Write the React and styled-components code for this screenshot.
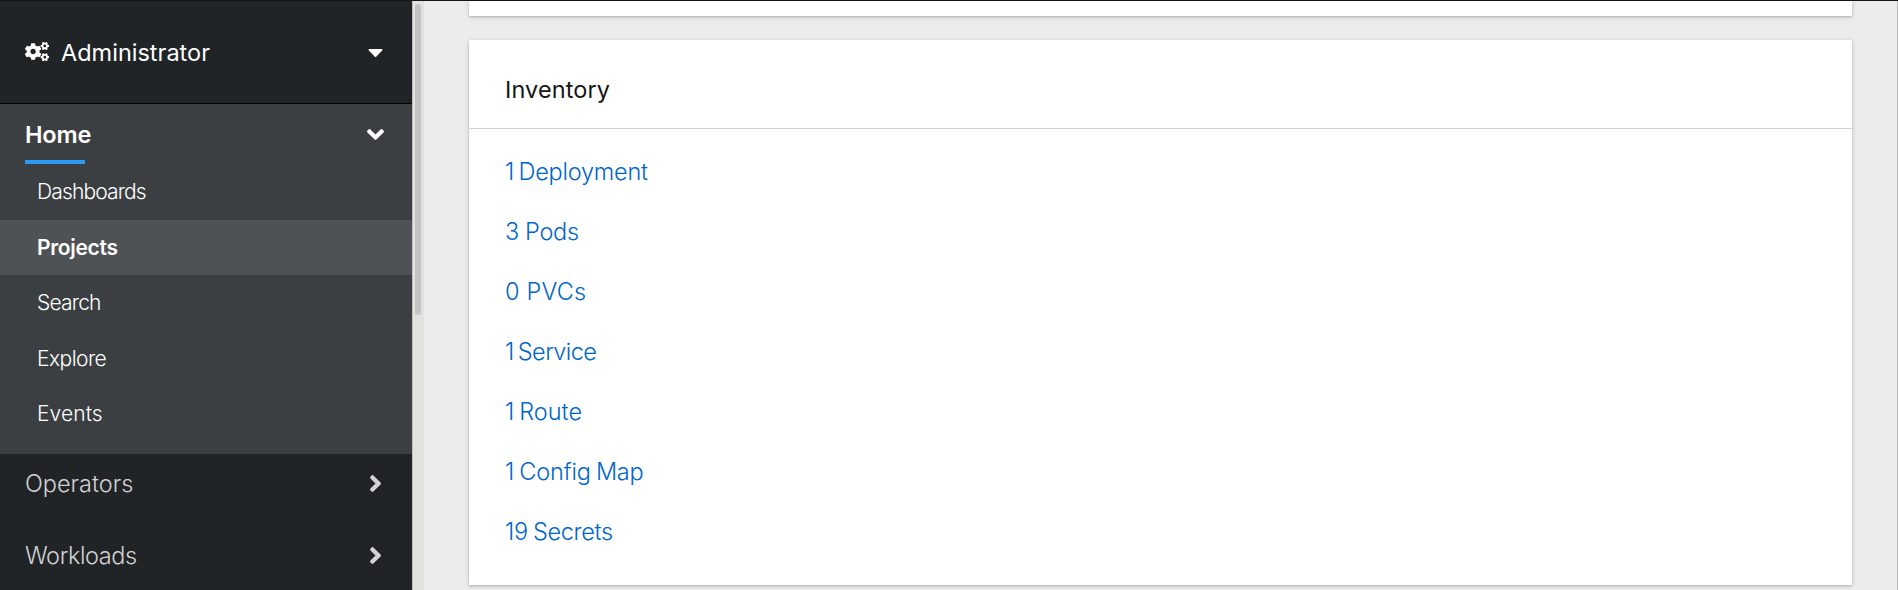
import React from "react";
import styled, { createGlobalStyle } from "styled-components";
import { FaCogs, FaCaretDown, FaAngleDown, FaAngleRight } from "react-icons/fa";

const GlobalStyle = createGlobalStyle`
  * { box-sizing: border-box; }
  body {
    margin: 0;
    overflow: hidden;
    background: #ececec;
    font-family: Inter, "Liberation Sans", sans-serif;
  }
`;

const Page = styled.div`
  display: flex;
  width: 100%;
  height: 590px;
  border-top: 1px solid #151515;
  overflow: hidden;
`;

const Sidebar = styled.nav`
  flex: none;
  width: 412px;
  background: #212427;
  color: #fff;
`;

const Label = styled.span`
  letter-spacing: ${(p) => p.$track || 0}px;
  word-spacing: ${(p) => p.$gap || 0}px;
  white-space: nowrap;
`;

const Perspective = styled.div`
  display: flex;
  align-items: center;
  height: 103px;
  padding: 0 28px 0 25px;
  border-bottom: 1px solid #030303;
  font-size: 23.5px;

  svg { flex: none; }
`;

const PerspectiveName = styled.div`
  flex: 1;
  margin-left: 12px;
  padding-top: 1px;
`;

const CogsIcon = styled(FaCogs)`
  width: 24px;
  height: 19.2px;
`;

const CaretIcon = styled(FaCaretDown)`
  width: 15px;
  height: 24px;
  margin-right: 1px;
`;

const OpenSection = styled.section`
  height: 350px;
  background: #3c3f42;
`;

const SectionHeader = styled.div`
  display: flex;
  align-items: center;
  justify-content: space-between;
  height: ${(p) => (p.$open ? 56 : 58)}px;
  margin-bottom: ${(p) => (p.$open ? 0 : 14)}px;
  padding: ${(p) => (p.$open ? "5px 28px 0 25px" : "0 28px 0 25px")};
  color: ${(p) => (p.$open ? "#fff" : "#d2d2d2")};
  font-size: 23.5px;
  font-weight: ${(p) => (p.$open ? 600 : 300)};

  svg {
    width: 17px;
    height: 27px;
  }
`;

const ActiveBar = styled.div`
  width: 60px;
  height: 4px;
  margin-left: 25px;
  background: #2b9af3;
`;

const SubList = styled.ul`
  margin: 0;
  padding: 0;
  list-style: none;
`;

const SubItem = styled.li`
  display: flex;
  align-items: center;
  height: 55.25px;
  padding-left: 37px;
  background: ${(p) => (p.$active ? "#4f5255" : "transparent")};
  font-size: 21px;
  font-weight: ${(p) => (p.$active ? 600 : 300)};

  &:first-child { padding-bottom: 1px; height: 56px; }
`;

const ScrollTrack = styled.div`
  flex: none;
  width: 12px;
  padding: 3px 3px 0 2px;
  border-left: 1px solid #c4c1bb;
  background: #e1e1df;
`;

const ScrollThumb = styled.div`
  width: 6px;
  height: 311px;
  border-radius: 3px;
  background: #c3c5c4;
`;

const Content = styled.main`
  flex: 1;
  padding: 0 45px;
  border-right: 1px solid #bababa;
`;

const Card = styled.section`
  background: #fff;
  box-shadow: 0 1px 2px rgba(3, 3, 3, 0.16), 0 1px 5px rgba(3, 3, 3, 0.14);
`;

const PreviousCard = styled(Card)`
  height: 15px;
  margin-bottom: 24px;
`;

const CardHeader = styled.header`
  display: flex;
  align-items: center;
  height: 89px;
  padding: 11px 36px 0 36px;
  border-bottom: 1px solid #d2d2d2;
  color: #151515;
  font-size: 23.5px;
`;

const InventoryList = styled.ul`
  margin: 0;
  padding: 12px 36px 24px;
  list-style: none;
`;

const InventoryItem = styled.li`
  display: flex;
  align-items: center;
  height: 60px;
`;

const Link = styled(Label).attrs({ as: "a" })`
  color: #06c;
  font-size: 23.5px;
  font-weight: 300;
  cursor: pointer;
`;

const homeItems = [
  { label: "Dashboards", track: -0.85 },
  { label: "Projects", track: -0.3, active: true },
  { label: "Search", track: -0.8 },
  { label: "Explore", track: -0.55 },
  { label: "Events", track: 0.1 },
];

const sections = [
  { label: "Operators", track: 0 },
  { label: "Workloads", track: -0.4 },
];

const inventory = [
  { label: "1 Deployment", track: -0.25, gap: -1.8 },
  { label: "3 Pods", track: -0.2, gap: -0.5 },
  { label: "0 PVCs", track: 0.2, gap: 0 },
  { label: "1 Service", track: -0.6, gap: -1.8 },
  { label: "1 Route", track: 0, gap: -1.6 },
  { label: "1 Config Map", track: -0.2, gap: -1.2 },
  { label: "19 Secrets", track: -0.35, gap: -1 },
];

export default function App() {
  return (
    <>
      <GlobalStyle />
      <Page>
        <Sidebar>
          <Perspective>
            <CogsIcon />
            <PerspectiveName>
              <Label $track={0}>Administrator</Label>
            </PerspectiveName>
            <CaretIcon />
          </Perspective>
          <OpenSection>
            <SectionHeader $open>
              <Label $track={-0.2}>Home</Label>
              <FaAngleDown />
            </SectionHeader>
            <ActiveBar />
            <SubList>
              {homeItems.map((item) => (
                <SubItem key={item.label} $active={item.active}>
                  <Label $track={item.track}>{item.label}</Label>
                </SubItem>
              ))}
            </SubList>
          </OpenSection>
          {sections.map((item) => (
            <SectionHeader key={item.label}>
              <Label $track={item.track}>{item.label}</Label>
              <FaAngleRight />
            </SectionHeader>
          ))}
        </Sidebar>
        <ScrollTrack>
          <ScrollThumb />
        </ScrollTrack>
        <Content>
          <PreviousCard />
          <Card>
            <CardHeader>
              <Label $track={0.1}>Inventory</Label>
            </CardHeader>
            <InventoryList>
              {inventory.map((item) => (
                <InventoryItem key={item.label}>
                  <Link $track={item.track} $gap={item.gap}>
                    {item.label}
                  </Link>
                </InventoryItem>
              ))}
            </InventoryList>
          </Card>
        </Content>
      </Page>
    </>
  );
}
